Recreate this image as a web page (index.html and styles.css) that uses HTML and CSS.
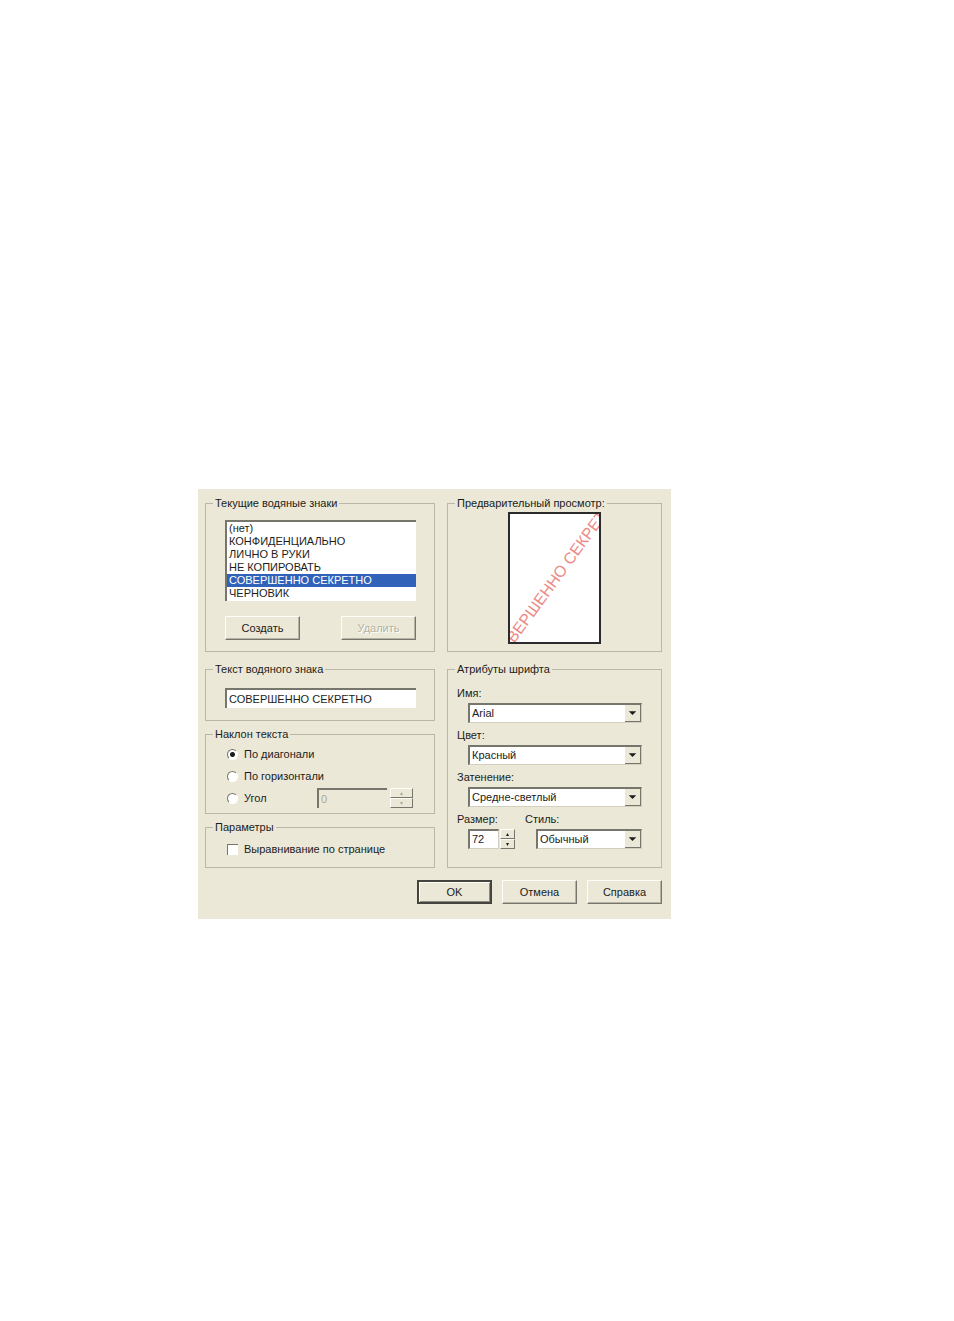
FILE: index.html
```html
<!DOCTYPE html>
<html lang="ru">
<head>
<meta charset="utf-8">
<title>Водяные знаки</title>
<link rel="stylesheet" href="styles.css">
</head>
<body>
<main class="page">
<form class="dialog">
  <div class="groups">
    <fieldset class="group">
      <legend>Текущие водяные знаки</legend>
      <div class="marks">
        <select class="list" size="6" aria-label="Текущие водяные знаки">
          <option>(нет)</option>
          <option>КОНФИДЕНЦИАЛЬНО</option>
          <option>ЛИЧНО В РУКИ</option>
          <option>НЕ КОПИРОВАТЬ</option>
          <option selected>СОВЕРШЕННО СЕКРЕТНО</option>
          <option>ЧЕРНОВИК</option>
        </select>
        <div class="mark-buttons">
          <button type="button" class="button">Создать</button>
          <button type="button" class="button" disabled>Удалить</button>
        </div>
      </div>
    </fieldset>

    <fieldset class="group">
      <legend>Предварительный просмотр:</legend>
      <div class="preview">
        <svg class="sheet" viewBox="0 0 90 129" role="img" aria-label="СОВЕРШЕННО СЕКРЕТНО">
          <text class="sheet-text" transform="translate(47 63) rotate(-54)" text-anchor="middle">СОВЕРШЕННО СЕКРЕТНО</text>
        </svg>
      </div>
    </fieldset>

    <div class="stack">
      <fieldset class="group">
        <legend>Текст водяного знака</legend>
        <div class="mark-text">
          <input class="field" type="text" value="СОВЕРШЕННО СЕКРЕТНО" aria-label="Текст водяного знака">
        </div>
      </fieldset>
      <fieldset class="group">
        <legend>Наклон текста</legend>
        <div class="angles">
          <label class="choice"><input class="radio" type="radio" name="angle" checked>По диагонали</label>
          <label class="choice"><input class="radio" type="radio" name="angle">По горизонтали</label>
          <div class="angle-row">
            <label class="choice"><input class="radio" type="radio" name="angle">Угол</label>
            <input class="field angle-field" type="text" value="0" aria-label="Угол наклона" disabled>
            <span class="spin spin-wide">
              <button type="button" class="spin-button" aria-label="Больше" disabled><svg class="tick" viewBox="0 0 5 3"><path d="M1 3L2.500 0L4 3Z"/></svg></button>
              <button type="button" class="spin-button" aria-label="Меньше" disabled><svg class="tick" viewBox="0 0 5 3"><path d="M1 0L2.500 3L4 0Z"/></svg></button>
            </span>
          </div>
        </div>
      </fieldset>
      <fieldset class="group">
        <legend>Параметры</legend>
        <div class="options">
          <label class="choice"><input class="check" type="checkbox">Выравнивание по странице</label>
        </div>
      </fieldset>
    </div>

    <fieldset class="group">
      <legend>Атрибуты шрифта</legend>
      <div class="font">
        <div class="attribute">
          <label for="name">Имя:</label>
          <span class="combo"><select id="name" class="field"><option>Arial</option></select><svg class="drop" viewBox="0 0 16 16"><path d="M4 6H12L8 10Z"/></svg></span>
        </div>
        <div class="attribute">
          <label for="color">Цвет:</label>
          <span class="combo"><select id="color" class="field"><option>Красный</option></select><svg class="drop" viewBox="0 0 16 16"><path d="M4 6H12L8 10Z"/></svg></span>
        </div>
        <div class="attribute">
          <label for="shade">Затенение:</label>
          <span class="combo"><select id="shade" class="field"><option>Средне-светлый</option></select><svg class="drop" viewBox="0 0 16 16"><path d="M4 6H12L8 10Z"/></svg></span>
        </div>
        <div class="size-style">
          <div class="attribute">
            <label for="size">Размер:</label>
            <span class="combo size">
              <input id="size" class="field" type="text" value="72">
              <span class="spin">
                <button type="button" class="spin-button" aria-label="Больше"><svg class="tick" viewBox="0 0 5 3"><path d="M1 3L2.500 0L4 3Z"/></svg></button>
                <button type="button" class="spin-button" aria-label="Меньше"><svg class="tick" viewBox="0 0 5 3"><path d="M1 0L2.500 3L4 0Z"/></svg></button>
              </span>
            </span>
          </div>
          <div class="attribute style">
            <label for="style">Стиль:</label>
            <span class="combo"><select id="style" class="field"><option>Обычный</option></select><svg class="drop" viewBox="0 0 16 16"><path d="M4 6H12L8 10Z"/></svg></span>
          </div>
        </div>
      </div>
    </fieldset>
  </div>

  <div class="actions">
    <button type="button" class="button default">OK</button>
    <button type="button" class="button">Отмена</button>
    <button type="button" class="button">Справка</button>
  </div>
</form>
</main>
</body>
</html>
```

FILE: styles.css
```css
* { box-sizing: border-box; }

body {
  margin: 0;
  background: #fff;
  color: #1c1c1a;
  font: 11px/14px "Liberation Sans", Arial, sans-serif;
}

button, input, select { font: inherit; color: inherit; margin: 0; }

.page { padding: 489px 283px 0 198px; }

.dialog {
  padding: 7px 9px 15px 7px;
  background: #ebe8d7;
}

.groups {
  display: grid;
  grid-template-columns: 230fr 215fr;
  gap: 10px 12px;
}

.group {
  min-width: 0;
  margin: 0;
  padding: 0;
  border: 1px solid #b9b7a7;
}

.group legend { margin-left: 7px; padding: 0 2px; }

.marks { padding: 10px 18px 11px 19px; }

.list {
  display: block;
  width: 100%;
  height: 81px;
  padding: 0;
  border: solid #77766c;
  border-width: 2px 0 0 2px;
  border-radius: 0;
  background: #fff;
  overflow: hidden;
  outline: none;
}

.list option {
  min-height: 13px;
  height: 13px;
  padding: 0 2px;
  line-height: 13px;
}

.list option:checked {
  background: #2f62b8 linear-gradient(#2f62b8, #2f62b8);
  color: #fff;
  -webkit-text-fill-color: #fff;
}

.mark-buttons {
  display: flex;
  justify-content: space-between;
  margin-top: 15px;
}

.button {
  width: 75px;
  height: 24px;
  padding: 0;
  border: 1px solid;
  border-color: #fffef6 #77766c #77766c #fffef6;
  border-radius: 0;
  background: #ebe8d7;
  box-shadow: inset -1px -1px #b4b2a2;
}

.button:disabled { color: #b4b2a2; text-shadow: 1px 1px #fff; }

.default {
  border: 2px solid #45443e;
  box-shadow: inset 1px 1px #fffef6, inset -1px -1px #8f8d80;
}

.preview { display: flex; justify-content: center; padding: 2px 0 0; }

.sheet {
  width: 93px;
  height: 132px;
  border: 2px solid #2b2b2b;
  background: #fff;
}

.sheet-text {
  font: 16px "Liberation Sans", Arial, sans-serif;
  fill: #ec8a86;
  dominant-baseline: central;
}

.stack { display: flex; flex-direction: column; gap: 6px; }

.mark-text { padding: 12px 18px 12px 19px; }

.field {
  display: block;
  width: 100%;
  height: 20px;
  padding: 0 2px 1px;
  border: solid #77766c;
  border-width: 2px 0 0 2px;
  border-radius: 0;
  background: #fff;
  appearance: none;
  outline: none;
}

.field:disabled { background: #ebe8d7; color: #aaa899; }

.angles { padding: 2px 21px 4px 21px; }

.choice { display: flex; align-items: center; gap: 6px; height: 22px; }

.angle-row { display: flex; align-items: center; gap: 3px; }
.angle-row .choice { flex: 1; }
.angle-field { width: 70px; }

.radio, .check {
  appearance: none;
  width: 11px;
  height: 11px;
  background: #fff;
}

.radio {
  border: 1px solid;
  border-color: #77766c #fff #fff #77766c;
  border-radius: 50%;
}

.radio:checked { background: radial-gradient(circle, #1c1c1a 2px, #fff 3px); }

.check { border: solid #77766c; border-width: 1px 0 0 1px; }

.options { padding: 4px 21px 7px 21px; }

.spin { display: flex; flex-direction: column; width: 15px; height: 20px; }
.spin-wide { width: 23px; }

.spin-button {
  display: flex;
  flex: 1;
  align-items: center;
  justify-content: center;
  padding: 0;
  border: 1px solid;
  border-color: #fffef6 #77766c #77766c #fffef6;
  border-radius: 0;
  background: #ebe8d7;
}

.tick { width: 5px; height: 3px; fill: #1c1c1a; }
.spin-button:disabled .tick { fill: #aaa899; }

.font { padding: 10px 19px 17px 9px; }

.attribute { margin-bottom: 5px; }
.attribute label { display: block; margin-bottom: 3px; }

.combo {
  position: relative;
  display: block;
  margin-left: 11px;
}

.combo .field { border-bottom: 1px solid #d2cfbf; border-right: 1px solid #d2cfbf; }

.drop {
  position: absolute;
  top: 2px;
  right: 1px;
  width: 16px;
  height: 17px;
  border: solid #77766c;
  border-width: 0 1px 1px 0;
  background: #ebe8d7;
  fill: #1c1c1a;
  pointer-events: none;
}

.size-style { display: flex; gap: 10px; }
.size-style .attribute { margin-bottom: 0; }
.size { display: flex; gap: 1px; }
.size .field { width: 31px; }
.style { flex: 1; }

.actions {
  display: flex;
  justify-content: flex-end;
  gap: 10px;
  margin-top: 12px;
}
```
